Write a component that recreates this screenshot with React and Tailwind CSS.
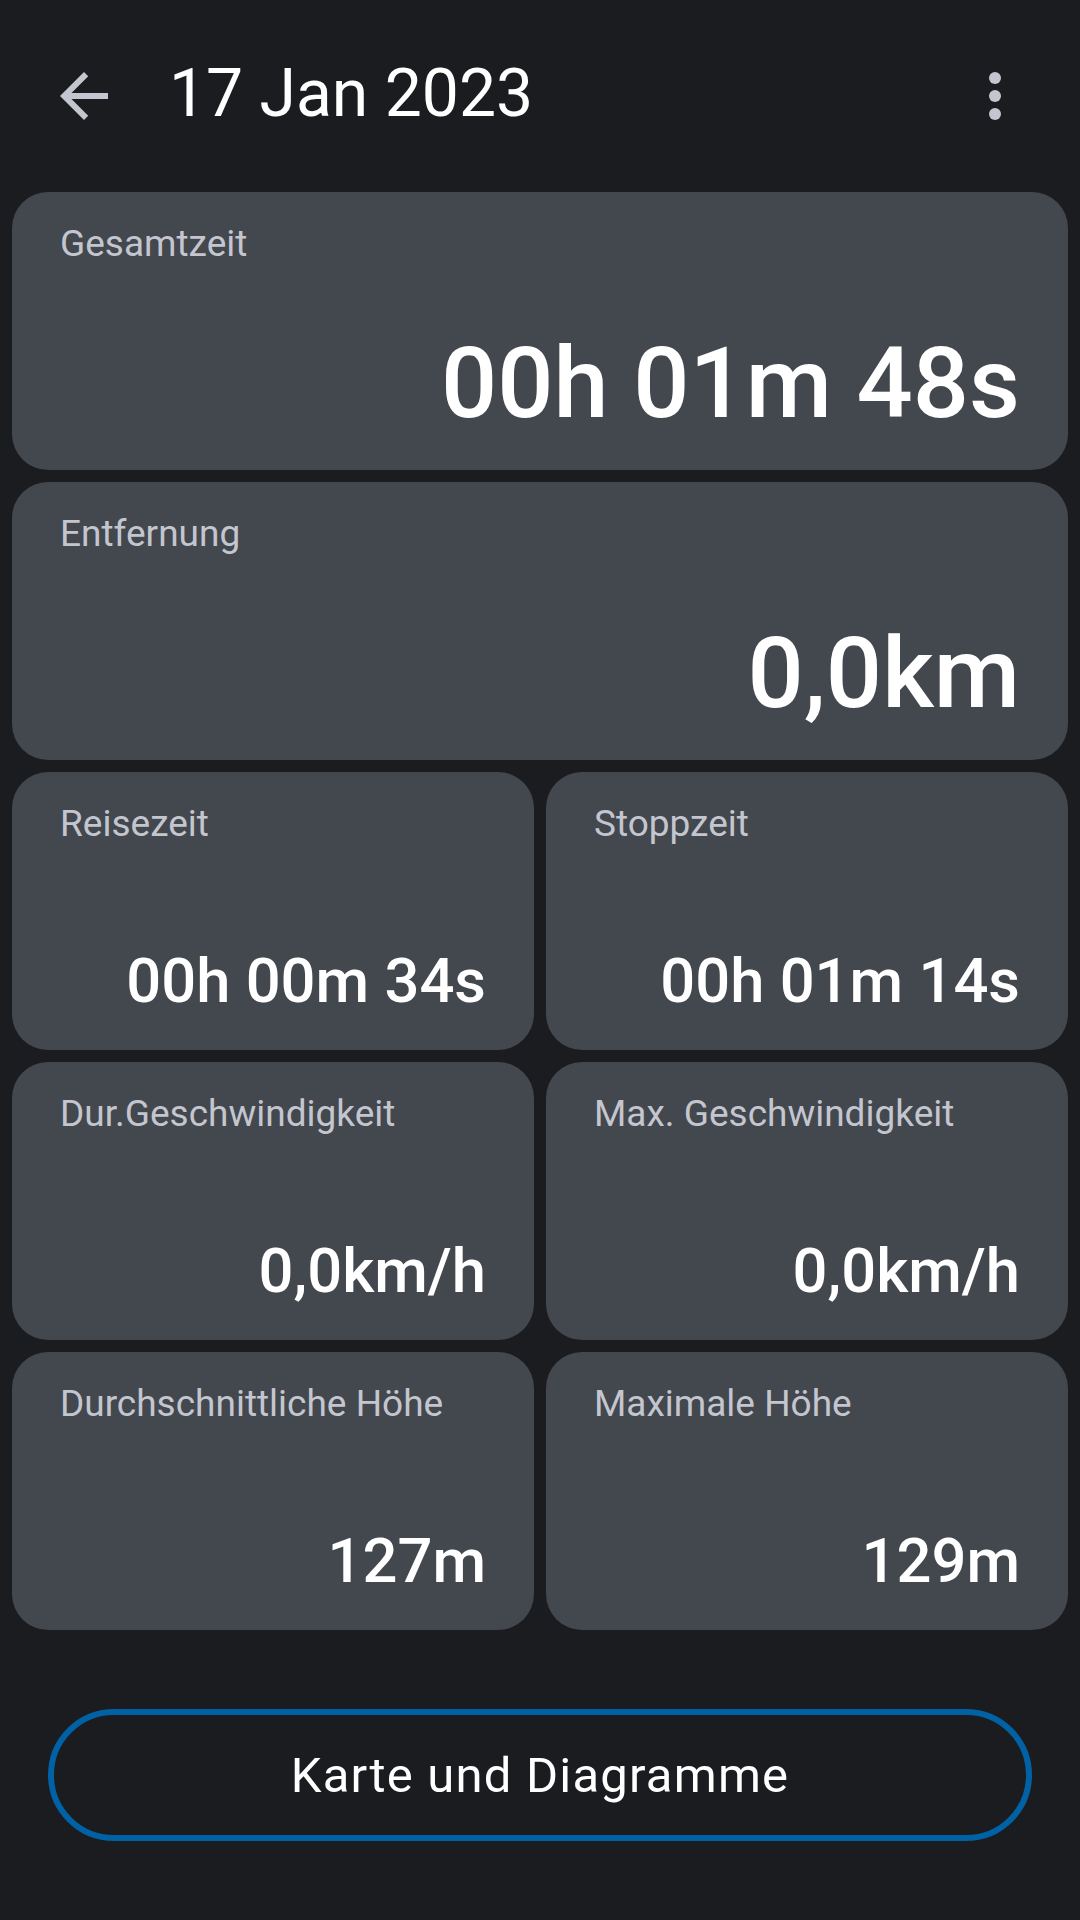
import React from 'react';

// Fahrtstatistik: Kopfzeile, Kacheln und Button
const stats = [
  { label: 'Gesamtzeit', value: '00h 01m 48s', wide: true },
  { label: 'Entfernung', value: '0,0km', wide: true },
  { label: 'Reisezeit', value: '00h 00m 34s' },
  { label: 'Stoppzeit', value: '00h 01m 14s' },
  { label: 'Dur.Geschwindigkeit', value: '0,0km/h' },
  { label: 'Max. Geschwindigkeit', value: '0,0km/h' },
  { label: 'Durchschnittliche Höhe', value: '127m' },
  { label: 'Maximale Höhe', value: '129m' },
];

function StatCard({ label, value, wide }) {
  return (
    <div
      className={`h-[278px] rounded-[36px] bg-[#43474e] flex flex-col justify-between pt-[33px] px-12 ${
        wide ? 'col-span-2 pb-[37px]' : 'pb-[38px]'
      }`}
    >
      <div className="text-[37px] leading-none text-[#c4c6cf]">{label}</div>
      <div
        className={`text-right font-medium leading-none text-white ${
          wide ? 'text-[99px]' : 'text-[61.5px]'
        }`}
      >
        {value}
      </div>
    </div>
  );
}

export default function App() {
  return (
    <div className="w-[1080px] h-[1920px] bg-[#1b1c1f] font-['Roboto',sans-serif]">
      {/* Kopfzeile */}
      <div className="h-[192px] flex items-start pt-[60px] pl-12 pr-[49px]">
        <svg className="w-[72px] h-[72px]" viewBox="0 0 24 24" fill="#c4c6cf">
          <path d="M20 11H7.83l5.59-5.59L12 4l-8 8 8 8 1.41-1.41L7.83 13H20v-2z" />
        </svg>
        <h1 className="ml-[49px] mt-[1px] text-[66px] leading-none text-white flex-1">17 Jan 2023</h1>
        <svg className="w-[72px] h-[72px]" viewBox="0 0 24 24" fill="#c4c6cf">
          <circle cx="12" cy="6" r="2" />
          <circle cx="12" cy="12" r="2" />
          <circle cx="12" cy="18" r="2" />
        </svg>
      </div>

      {/* Kacheln */}
      <div className="grid grid-cols-2 gap-3 px-3">
        {stats.map((s, i) => (
          <StatCard key={i} {...s} />
        ))}
      </div>

      {/* Button */}
      <div className="mt-[79px] mx-12">
        <button className="w-full h-[132px] rounded-full border-[6px] border-[#0061a4] text-[49px] tracking-[1.2px] text-white leading-none">
          Karte und Diagramme
        </button>
      </div>
    </div>
  );
}
